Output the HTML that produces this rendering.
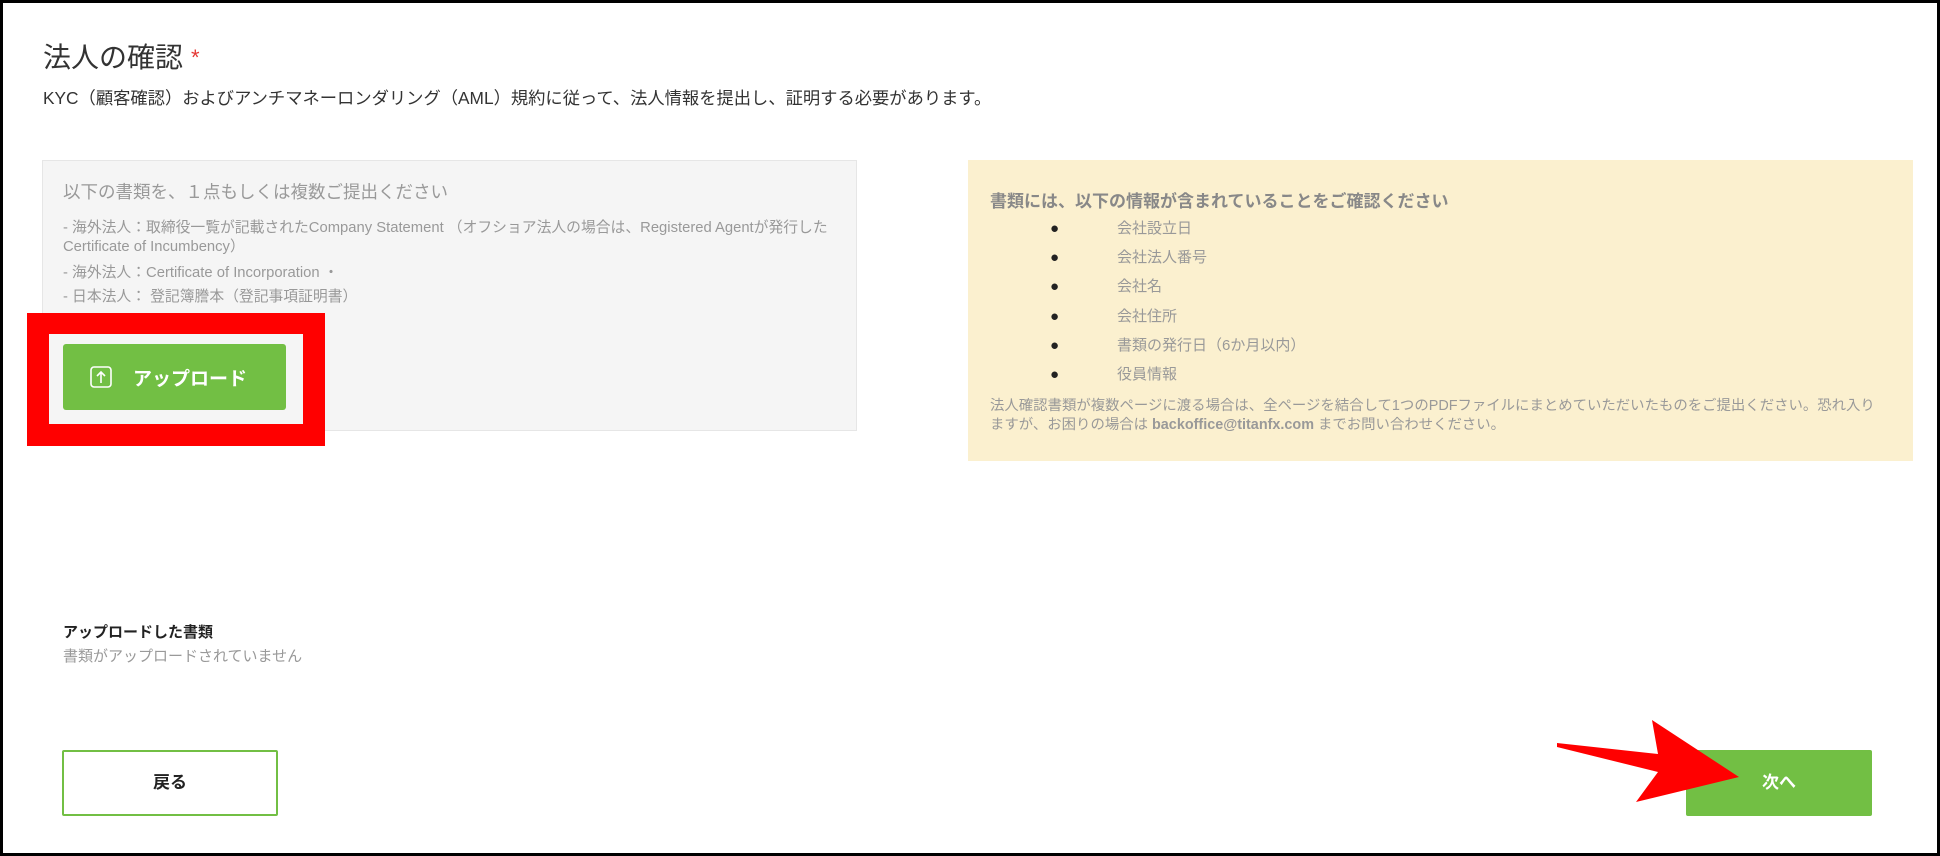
<!DOCTYPE html>
<html><head><meta charset="utf-8"><style>
*{margin:0;padding:0;box-sizing:border-box}
body{width:1940px;height:856px;overflow:hidden;background:#fff;font-family:"Liberation Sans","Noto Sans CJK JP",sans-serif;position:relative}
.frame{position:absolute;left:0;top:0;width:1940px;height:856px;border:3px solid #000}
.a{position:absolute;white-space:nowrap}
</style></head><body>
<div class="frame"></div>
<div class="a" style="left:43px;top:36px;font-size:28px;color:#333">法人の確認<span style="color:#e53935;font-size:22px;position:relative;top:-2px;margin-left:8px">*</span></div>
<div class="a" style="left:43px;top:84px;font-size:17.3px;color:#333">KYC（顧客確認）およびアンチマネーロンダリング（AML）規約に従って、法人情報を提出し、証明する必要があります。</div>

<div class="a" style="left:42px;top:160px;width:815px;height:271px;background:#f5f5f5;border:1px solid #e6e6e6"></div>
<div class="a" style="left:63px;top:179px;font-size:17.5px;color:#999">以下の書類を、１点もしくは複数ご提出ください</div>
<div class="a" style="left:63px;top:219px;font-size:14.8px;line-height:19px;color:#999">- 海外法人：取締役一覧が記載されたCompany Statement （オフショア法人の場合は、Registered Agentが発行した<br>Certificate of Incumbency）</div>
<div class="a" style="left:63px;top:261px;font-size:14.8px;color:#999">- 海外法人：Certificate of Incorporation ・</div>
<div class="a" style="left:63px;top:285px;font-size:14.8px;color:#999">- 日本法人： 登記簿謄本（登記事項証明書）</div>

<div class="a" style="left:27px;top:313px;width:298px;height:133px;border:22px solid #ff0000;border-top-width:21px"></div>
<div class="a" style="left:63px;top:344px;width:223px;height:66px;background:#72bf44;border-radius:3px"></div>
<svg class="a" style="left:90px;top:366px" width="22" height="22" viewBox="0 0 22 22"><rect x="1" y="1" width="20" height="20" rx="3" fill="none" stroke="#fff" stroke-width="1.6"/><path d="M11 17V6M7 10l4-4 4 4" fill="none" stroke="#fff" stroke-width="1.6"/></svg>
<div class="a" style="left:133px;top:364px;font-size:19px;font-weight:bold;color:#fff">アップロード</div>

<div class="a" style="left:968px;top:160px;width:945px;height:301px;background:#fbf0cf"></div>
<div class="a" style="left:990px;top:187px;font-size:17px;font-weight:bold;color:#888">書類には、以下の情報が含まれていることをご確認ください</div>
<div class="a" style="left:1050px;top:214px;font-size:15px;color:#999;line-height:29.2px">
<div><span style="color:#222;display:inline-block;width:67px">●</span>会社設立日</div>
<div><span style="color:#222;display:inline-block;width:67px">●</span>会社法人番号</div>
<div><span style="color:#222;display:inline-block;width:67px">●</span>会社名</div>
<div><span style="color:#222;display:inline-block;width:67px">●</span>会社住所</div>
<div><span style="color:#222;display:inline-block;width:67px">●</span>書類の発行日（6か月以内）</div>
<div><span style="color:#222;display:inline-block;width:67px">●</span>役員情報</div>
</div>
<div class="a" style="left:990px;top:397px;font-size:14.4px;line-height:19px;color:#999">法人確認書類が複数ページに渡る場合は、全ページを結合して1つのPDFファイルにまとめていただいたものをご提出ください。恐れ入り<br>ますが、お困りの場合は <b>backoffice@titanfx.com</b> までお問い合わせください。</div>

<div class="a" style="left:63px;top:621px;font-size:15px;font-weight:bold;color:#222">アップロードした書類</div>
<div class="a" style="left:63px;top:645px;font-size:15px;color:#999">書類がアップロードされていません</div>

<div class="a" style="left:62px;top:750px;width:216px;height:66px;border:2px solid #72bf44;border-radius:2px;text-align:center;line-height:62px;font-size:17px;font-weight:bold;color:#222">戻る</div>
<div class="a" style="left:1686px;top:750px;width:186px;height:66px;background:#72bf44;border-radius:2px;text-align:center;line-height:66px;font-size:17px;font-weight:bold;color:#fff">次へ</div>
<svg class="a" style="left:0;top:0" width="1940" height="856"><polygon points="1557,743 1658,754 1652,720 1739,777 1636,802 1658,772 1557,747" fill="#ff0000"/></svg>
</body></html>
